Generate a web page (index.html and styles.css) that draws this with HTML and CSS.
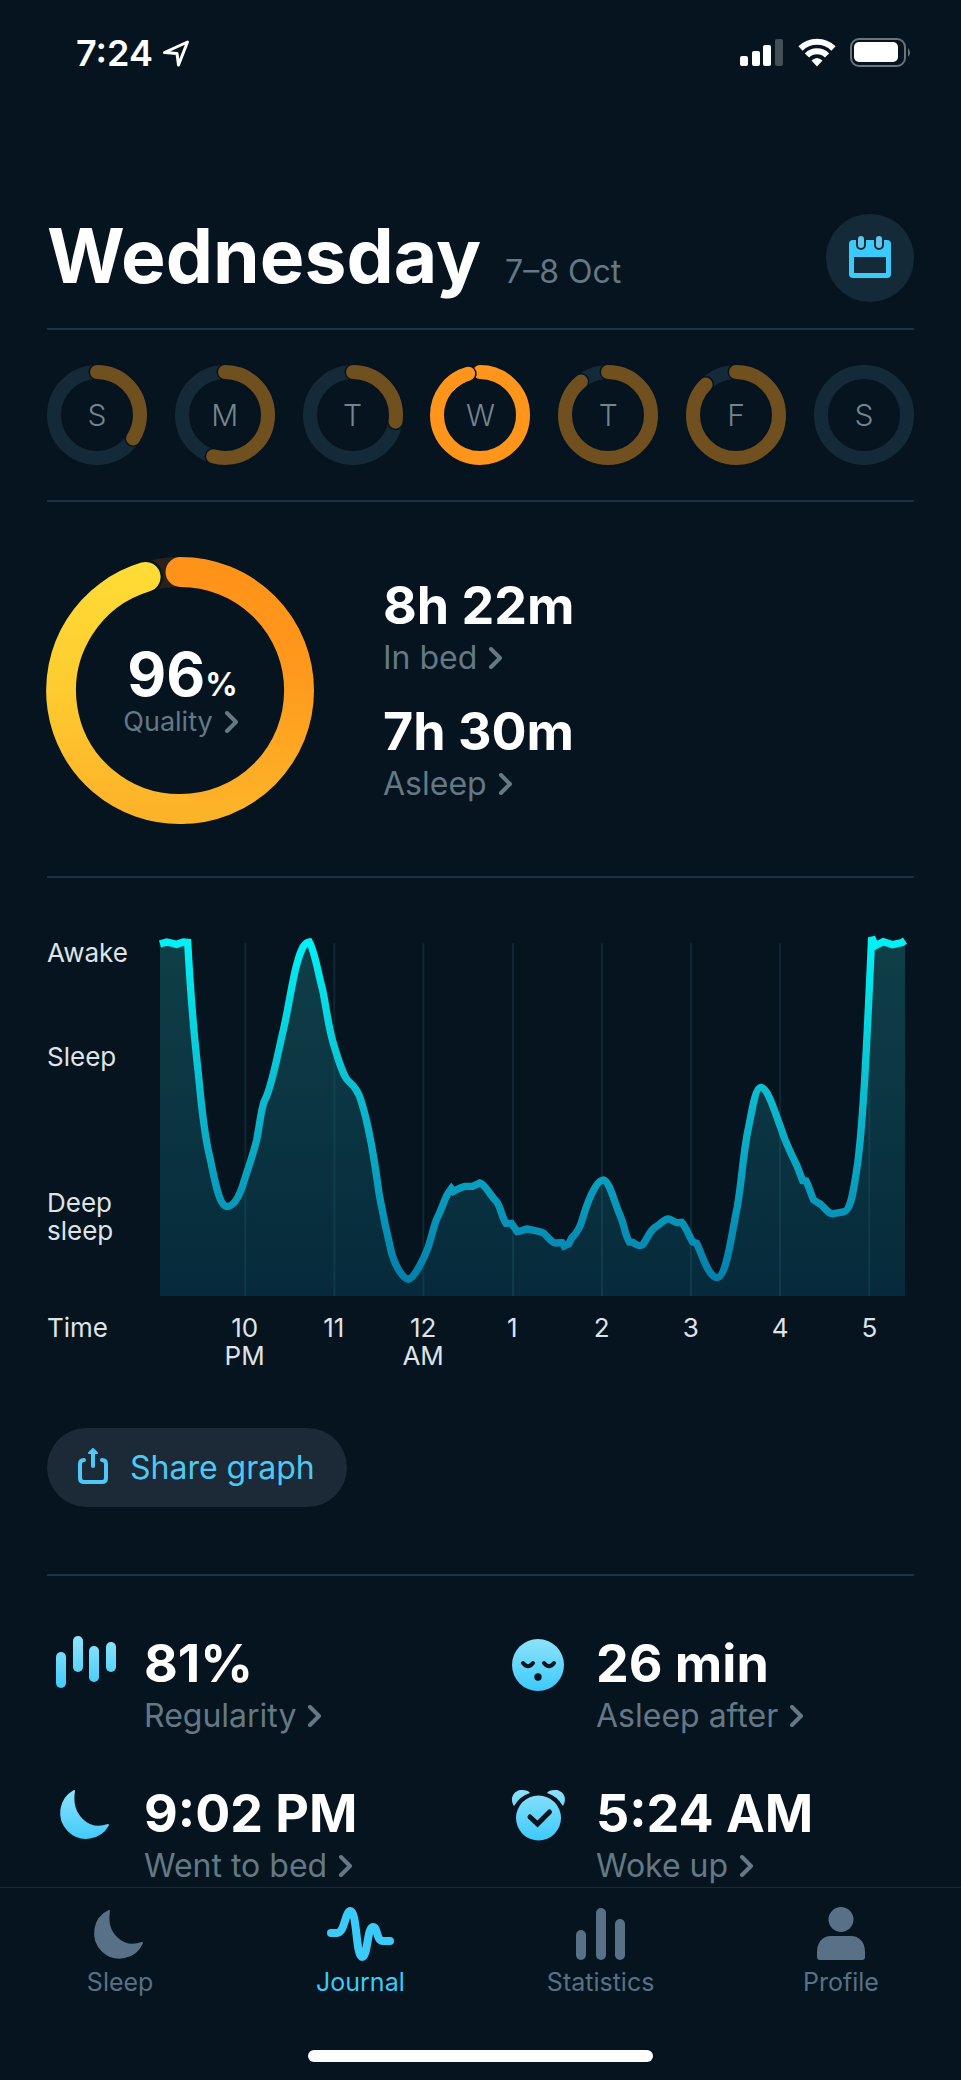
FILE: index.html
```html
<!DOCTYPE html>
<html lang="en">
<head>
<meta charset="utf-8">
<meta name="viewport" content="width=device-width, initial-scale=1">
<title>Sleep journal</title>
<link rel="stylesheet" href="styles.css">
</head>
<body>
<svg class="defs" aria-hidden="true">
  <defs>
    <linearGradient id="sky" x1="0" y1="0" x2="0" y2="56" gradientUnits="userSpaceOnUse">
      <stop offset="0" stop-color="#8fe3fb"/><stop offset="1" stop-color="#38c8fb"/>
    </linearGradient>
    <symbol id="chevron" viewBox="0 0 14 22"><path d="M3 2 L12 11 L3 20" fill="none" stroke="currentColor" stroke-width="4" stroke-linecap="round" stroke-linejoin="round"/></symbol>
  </defs>
</svg>

<div class="status">
  <div class="status-left">
    <time class="clock">7:24</time>
    <svg width="28" height="28" viewBox="0 0 28 28" aria-hidden="true"><path d="M2.5 13.5 L25.5 3 L16.500 26 L15 14.500 Z" fill="none" stroke="#fff" stroke-width="3" stroke-linejoin="round"/></svg>
  </div>
  <div class="status-right">
    <svg width="44" height="30" viewBox="0 0 44 30" aria-hidden="true"><g fill="#fff"><rect x="0" y="18" width="8" height="10" rx="2"/><rect x="12" y="13" width="8" height="15" rx="2"/><rect x="23" y="7" width="8" height="21" rx="2"/><rect x="35" y="1" width="8" height="27" rx="2" opacity=".25"/></g></svg>
    <svg width="38" height="30" viewBox="0 0 38 30" aria-hidden="true"><g fill="none" stroke="#fff" stroke-width="6"><path d="M2.500 10.500 A23.500 23.500 0 0 1 35.500 10.500"/><path d="M9 17.500 A14 14 0 0 1 29 17.500"/></g><path d="M13.500 22.500 Q19 17.500 24.500 22.500 L19 28.500 Z" fill="#fff"/></svg>
    <svg width="62" height="30" viewBox="0 0 62 30" aria-hidden="true"><rect x="1" y="1" width="54" height="27" rx="8" fill="none" stroke="#69747b" stroke-width="2"/><rect x="4" y="4" width="44" height="20" rx="5" fill="#fff"/><path d="M58 10 Q62 14.500 58 19 Z" fill="#69747b"/></svg>
  </div>
</div>

<main>
  <header class="header">
    <div class="title">
      <h1>Wednesday</h1>
      <p class="date">7–8 Oct</p>
    </div>
    <button class="calendar" type="button" aria-label="Open calendar">
      <svg width="44" height="44" viewBox="0 0 44 44" aria-hidden="true"><rect x="1" y="4" width="42" height="38" rx="4" fill="#3acbfa"/><rect x="6" y="21" width="32" height="16" fill="#152a38"/><g fill="#62c6ea" stroke="#152a38" stroke-width="2"><rect x="9" y="-1" width="8" height="14" rx="4"/><rect x="27" y="-1" width="8" height="14" rx="4"/></g></svg>
    </button>
  </header>

  <nav class="week" aria-label="Days">
    <button class="day" type="button"><svg viewBox="0 0 100 100" aria-hidden="true"><circle class="track" cx="50" cy="50" r="43"/><circle class="gap" pathLength="360" stroke-dasharray="123 400" cx="50" cy="50" r="43"/><circle class="arc" pathLength="360" stroke-dasharray="123 400" cx="50" cy="50" r="43"/></svg><span>S</span></button>
    <button class="day" type="button"><svg viewBox="0 0 100 100" aria-hidden="true"><circle class="track" cx="50" cy="50" r="43"/><circle class="gap" pathLength="360" stroke-dasharray="196 400" cx="50" cy="50" r="43"/><circle class="arc" pathLength="360" stroke-dasharray="196 400" cx="50" cy="50" r="43"/></svg><span>M</span></button>
    <button class="day" type="button"><svg viewBox="0 0 100 100" aria-hidden="true"><circle class="track" cx="50" cy="50" r="43"/><circle class="gap" pathLength="360" stroke-dasharray="99 400" cx="50" cy="50" r="43"/><circle class="arc" pathLength="360" stroke-dasharray="99 400" cx="50" cy="50" r="43"/></svg><span>T</span></button>
    <button class="day current" type="button" aria-current="date"><svg viewBox="0 0 100 100" aria-hidden="true"><circle class="arc" pathLength="360" stroke-dasharray="344 400" cx="50" cy="50" r="43"/><circle class="gap" pathLength="360" stroke-dasharray="1 400" stroke-dashoffset="-343" cx="50" cy="50" r="43"/><circle class="arc" pathLength="360" stroke-dasharray="30 400" stroke-dashoffset="-314" cx="50" cy="50" r="43"/></svg><span>W</span></button>
    <button class="day" type="button"><svg viewBox="0 0 100 100" aria-hidden="true"><circle class="track" cx="50" cy="50" r="43"/><circle class="gap" pathLength="360" stroke-dasharray="321 400" cx="50" cy="50" r="43"/><circle class="arc" pathLength="360" stroke-dasharray="321 400" cx="50" cy="50" r="43"/></svg><span>T</span></button>
    <button class="day" type="button"><svg viewBox="0 0 100 100" aria-hidden="true"><circle class="track" cx="50" cy="50" r="43"/><circle class="gap" pathLength="360" stroke-dasharray="315 400" cx="50" cy="50" r="43"/><circle class="arc" pathLength="360" stroke-dasharray="315 400" cx="50" cy="50" r="43"/></svg><span>F</span></button>
    <button class="day" type="button"><svg viewBox="0 0 100 100" aria-hidden="true"><circle class="track" cx="50" cy="50" r="43"/></svg><span>S</span></button>
  </nav>

  <section class="summary">
    <div class="quality">
      <svg viewBox="0 0 268 268" aria-hidden="true">
        <defs>
          <linearGradient id="warm" x1="0" y1="15" x2="0" y2="253" gradientUnits="userSpaceOnUse"><stop offset="0" stop-color="#ff931a"/><stop offset=".4" stop-color="#ff981c"/><stop offset="1" stop-color="#fdb328"/></linearGradient>
          <linearGradient id="gold" x1="0" y1="15" x2="0" y2="253" gradientUnits="userSpaceOnUse"><stop offset="0" stop-color="#ffdb35"/><stop offset=".5" stop-color="#fecb30"/><stop offset="1" stop-color="#fdb328"/></linearGradient>
        </defs>
        <g fill="none" stroke-width="30">
          <path d="M99 20 A119 119 0 0 1 134 15" stroke="#2a211b"/>
          <path d="M134 15 A119 119 0 0 1 134 253" stroke="url(#warm)" stroke-linecap="round"/>
          <path d="M96 21 L99 20" stroke="#05141e" stroke-width="35" stroke-linecap="round"/>
          <path d="M134 253 A119 119 0 0 1 99 20" stroke="url(#gold)" stroke-linecap="round"/>
        </g>
      </svg>
      <div class="quality-text">
        <strong class="score">96<small>%</small></strong>
        <a class="more small" href="#quality">Quality <svg class="chev"><use href="#chevron"/></svg></a>
      </div>
    </div>
    <div class="durations">
      <div><strong class="value">8h 22m</strong><a class="more" href="#bed">In bed <svg class="chev"><use href="#chevron"/></svg></a></div>
      <div><strong class="value">7h 30m</strong><a class="more" href="#asleep">Asleep <svg class="chev"><use href="#chevron"/></svg></a></div>
    </div>
  </section>

  <section class="graph">
    <div class="chart">
      <div class="levels"><span>Awake</span><span>Sleep</span><span>Deep<br>sleep</span></div>
      <svg class="plot" viewBox="480 90 2235 1098" preserveAspectRatio="none" role="img" aria-label="Sleep depth over the night">
        <defs>
          <linearGradient id="line" x1="0" y1="120" x2="0" y2="1140" gradientUnits="userSpaceOnUse"><stop offset="0" stop-color="#00f2f5"/><stop offset=".45" stop-color="#0cbccf"/><stop offset="1" stop-color="#0580ac"/></linearGradient>
          <linearGradient id="area" x1="0" y1="120" x2="0" y2="1188" gradientUnits="userSpaceOnUse"><stop offset="0" stop-color="#0f3f48"/><stop offset="1" stop-color="#062a3b"/></linearGradient>
          <path id="curve" d="M480 132 L500 126 L530 133 L550 126 L563 127 C570 250 580 390 595 520 C603 600 610 690 628 765 C642 825 655 920 682 920 C700 918 715 895 727 860 C740 815 758 770 770 720 C778 680 783 630 792 606 L800 588 C822 530 832 465 850 390 C865 325 872 270 886 210 C897 165 908 128 928 126 C945 155 955 225 968 270 C980 330 985 380 1000 430 C1015 480 1030 530 1045 543 C1062 558 1075 572 1085 608 C1115 705 1125 800 1138 885 C1150 950 1163 1010 1175 1060 C1187 1100 1208 1136 1226 1138 C1245 1132 1272 1075 1285 1040 C1296 1008 1305 960 1316 945 C1327 920 1337 890 1344 880 L1354 866 L1360 874 C1375 867 1385 860 1397 859 L1418 859 L1440 849 C1455 853 1470 885 1488 903 C1503 920 1502 945 1518 970 L1534 970 L1552 995 C1565 994 1575 987 1582 987 C1600 992 1617 991 1632 1000 C1645 1012 1655 1027 1666 1029 L1686 1028 L1692 1038 L1706 1032 L1715 1014 C1730 1000 1740 985 1748 955 C1760 915 1785 840 1811 840 C1830 845 1845 915 1862 950 C1873 975 1875 1005 1888 1026 L1898 1027 C1908 1036 1920 1039 1928 1034 C1940 1020 1948 993 1965 982 C1980 975 1992 957 2004 957 C2015 957 2025 970 2035 968 L2045 967 C2057 980 2065 1003 2078 1026 L2090 1030 C2105 1060 2125 1133 2152 1133 C2180 1130 2195 1000 2212 920 C2227 830 2228 770 2244 690 C2255 640 2265 563 2282 562 C2305 563 2325 640 2345 690 C2355 725 2375 765 2390 795 L2408 842 L2418 843 C2430 865 2433 885 2441 900 L2462 913 C2475 923 2485 943 2500 941 L2530 936 C2555 933 2562 860 2573 790 C2592 640 2602 390 2615 112 L2626 137 L2650 125 L2678 134 L2706 128 L2715 122"/>
        </defs>
        <use href="#curve" fill="none" stroke="#020b14" stroke-width="22" opacity=".4" y="8"/>
        <path d="M480 132 L500 126 L530 133 L550 126 L563 127 C570 250 580 390 595 520 C603 600 610 690 628 765 C642 825 655 920 682 920 C700 918 715 895 727 860 C740 815 758 770 770 720 C778 680 783 630 792 606 L800 588 C822 530 832 465 850 390 C865 325 872 270 886 210 C897 165 908 128 928 126 C945 155 955 225 968 270 C980 330 985 380 1000 430 C1015 480 1030 530 1045 543 C1062 558 1075 572 1085 608 C1115 705 1125 800 1138 885 C1150 950 1163 1010 1175 1060 C1187 1100 1208 1136 1226 1138 C1245 1132 1272 1075 1285 1040 C1296 1008 1305 960 1316 945 C1327 920 1337 890 1344 880 L1354 866 L1360 874 C1375 867 1385 860 1397 859 L1418 859 L1440 849 C1455 853 1470 885 1488 903 C1503 920 1502 945 1518 970 L1534 970 L1552 995 C1565 994 1575 987 1582 987 C1600 992 1617 991 1632 1000 C1645 1012 1655 1027 1666 1029 L1686 1028 L1692 1038 L1706 1032 L1715 1014 C1730 1000 1740 985 1748 955 C1760 915 1785 840 1811 840 C1830 845 1845 915 1862 950 C1873 975 1875 1005 1888 1026 L1898 1027 C1908 1036 1920 1039 1928 1034 C1940 1020 1948 993 1965 982 C1980 975 1992 957 2004 957 C2015 957 2025 970 2035 968 L2045 967 C2057 980 2065 1003 2078 1026 L2090 1030 C2105 1060 2125 1133 2152 1133 C2180 1130 2195 1000 2212 920 C2227 830 2228 770 2244 690 C2255 640 2265 563 2282 562 C2305 563 2325 640 2345 690 C2355 725 2375 765 2390 795 L2408 842 L2418 843 C2430 865 2433 885 2441 900 L2462 913 C2475 923 2485 943 2500 941 L2530 936 C2555 933 2562 860 2573 790 C2592 640 2602 390 2615 112 L2626 137 L2650 125 L2678 134 L2706 128 L2715 122 V1188 H480 Z" fill="url(#area)"/>
        <path d="M736 130 V1188 M1003 130 V1188 M1270 130 V1188 M1539 130 V1188 M1806 130 V1188 M2073 130 V1188 M2340 130 V1188 M2608 130 V1188" fill="none" stroke="#2f7184" stroke-opacity=".22" stroke-width="6"/>
        <use href="#curve" fill="none" stroke="url(#line)" stroke-width="22" stroke-miterlimit="2"/>
      </svg>
      <span class="axis">Time</span>
      <div class="hours"><span>10<br>PM</span><span>11</span><span>12<br>AM</span><span>1</span><span>2</span><span>3</span><span>4</span><span>5</span></div>
    </div>
    <button class="share" type="button">
      <svg width="30" height="38" viewBox="0 0 30 38" aria-hidden="true"><path d="M6 11 C3 11 2 13 2 15 V29 Q2 33 6 33 H24 Q28 33 28 29 V15 C28 13 27 11 24 11 M15 17 V4" fill="none" stroke="currentColor" stroke-width="4" stroke-linecap="round"/><path d="M15 0 L19 4 H11 Z" fill="currentColor" stroke="currentColor" stroke-width="2" stroke-linejoin="round"/></svg>
      Share graph
    </button>
  </section>

  <section class="stats">
    <div class="stat">
      <svg class="stat-icon" viewBox="0 0 78 56" aria-hidden="true"><g fill="url(#sky)"><rect x="9" y="14" width="10" height="36" rx="5"/><rect x="26" y="-2" width="10" height="36" rx="5"/><rect x="42" y="8" width="10" height="36" rx="5"/><rect x="59" y="4" width="10" height="30" rx="5"/></g></svg>
      <div><strong class="value">81%</strong><a class="more" href="#regularity">Regularity <svg class="chev"><use href="#chevron"/></svg></a></div>
    </div>
    <div class="stat">
      <svg class="stat-icon" viewBox="0 0 78 56" aria-hidden="true"><circle cx="39" cy="27" r="26" fill="url(#sky)"/><g fill="none" stroke="#05141e" stroke-width="4" stroke-linecap="round"><path d="M24 25 Q29 31.500 34 25"/><path d="M45 25 Q50 31.500 55 25"/></g><circle cx="39" cy="39" r="3.700" fill="#05141e"/></svg>
      <div><strong class="value">26 min</strong><a class="more" href="#asleep-after">Asleep after <svg class="chev"><use href="#chevron"/></svg></a></div>
    </div>
    <div class="stat">
      <svg class="stat-icon" viewBox="2 -1 78 56" aria-hidden="true"><path d="M29 2 A25 25 0 1 0 63 36 C43 43 25 26 29 2 Z" fill="url(#sky)" stroke="url(#sky)" stroke-width="2" stroke-linejoin="round"/></svg>
      <div><strong class="value">9:02 PM</strong><a class="more" href="#went-to-bed">Went to bed <svg class="chev"><use href="#chevron"/></svg></a></div>
    </div>
    <div class="stat">
      <svg class="stat-icon" viewBox="0 0 78 56" aria-hidden="true"><circle cx="39.500" cy="30" r="22.500" fill="url(#sky)"/><g fill="url(#sky)"><path d="M15 18 C10 10 15 2 23 2 C27 2 30 3 31 5 Q21 8 15 18 Z"/><path d="M64 18 C69 10 64 2 56 2 C52 2 49 3 48 5 Q58 8 64 18 Z"/></g><path d="M31 29 L38.500 36 L50.500 24" fill="none" stroke="#05141e" stroke-width="5" stroke-linecap="round"/></svg>
      <div><strong class="value">5:24 AM</strong><a class="more" href="#woke-up">Woke up <svg class="chev"><use href="#chevron"/></svg></a></div>
    </div>
  </section>
</main>

<footer class="bottom">
  <nav class="tabs" aria-label="Main">
    <a class="tab" href="#sleep"><svg width="72" height="56" viewBox="3 -2 72 56" aria-hidden="true"><path d="M28 3 A24.500 24.500 0 1 0 61 35 C42 42 24 26 28 3 Z" fill="currentColor" stroke="currentColor" stroke-width="2" stroke-linejoin="round"/></svg>Sleep</a>
    <a class="tab active" href="#journal" aria-current="page"><svg width="72" height="56" viewBox="0 0 72 56" aria-hidden="true"><path d="M7 27 H13 C21 27 21 5 26.500 5 C33 5 32 51 38 51 C44 51 43 21 49 21 C54 21 52 35 59 35 H66" fill="none" stroke="currentColor" stroke-width="8" stroke-linecap="round"/></svg>Journal</a>
    <a class="tab" href="#statistics"><svg width="72" height="56" viewBox="0 0 72 56" aria-hidden="true"><g fill="currentColor"><rect x="11" y="24" width="10" height="30" rx="5"/><rect x="31" y="2" width="10" height="52" rx="5"/><rect x="50" y="13" width="10" height="41" rx="5"/></g></svg>Statistics</a>
    <a class="tab" href="#profile"><svg width="72" height="56" viewBox="0 0 72 56" aria-hidden="true"><circle cx="36" cy="13.500" r="12.500" fill="currentColor"/><path d="M12 51 V46 C12 36 18 30 26 30 H46 C54 30 60 36 60 46 V51 Q60 54 57 54 H15 Q12 54 12 51 Z" fill="currentColor"/></svg>Profile</a>
  </nav>
  <div class="home"></div>
</footer>
</body>
</html>
```
FILE: styles.css
```css
:root {
  --bg: #05141e;
  --rule: #1b3342;
  --muted: #647985;
  --track: #152a38;
  --accent: #3acbfa;
}

* { box-sizing: border-box; margin: 0; }

body {
  display: flex;
  flex-direction: column;
  min-height: 100vh;
  background: var(--bg);
  color: #fff;
  font-family: Inter, "Liberation Sans", sans-serif;
}

button { border: 0; padding: 0; background: none; font: inherit; color: inherit; }
a { color: inherit; text-decoration: none; }
svg { display: block; flex: none; overflow: visible; }
.defs { position: absolute; width: 0; height: 0; }

.status {
  display: flex;
  justify-content: space-between;
  align-items: center;
  padding: 31px 49px 0 76px;
}
.status-left { display: flex; align-items: center; gap: 9px; }
.status-right { display: flex; align-items: center; gap: 14px; }
.clock { font-size: 36px; line-height: 44px; font-weight: 600; }

main { padding: 0 47px; }

.header {
  display: flex;
  justify-content: space-between;
  align-items: flex-start;
  margin-top: 139px;
  padding-bottom: 26px;
  border-bottom: 2px solid var(--rule);
}
.title { display: flex; align-items: baseline; gap: 24px; }
h1 { font-size: 75px; line-height: 84px; font-weight: 700; }
.date { font-size: 32px; color: var(--muted); }
.calendar {
  display: grid;
  place-items: center;
  width: 88px;
  height: 88px;
  border-radius: 50%;
  background: var(--track);
}

.week {
  display: flex;
  justify-content: space-between;
  padding: 35px 0;
  border-bottom: 2px solid var(--rule);
}
.day {
  display: grid;
  place-items: center;
  width: 100px;
  height: 100px;
  font-size: 30px;
  font-weight: 300;
  color: #74858f;
}
.day > * { grid-area: 1 / 1; }
.day svg { width: 100%; transform: rotate(-90deg); }
.day circle { fill: none; stroke-width: 14; }
.day .track { stroke: var(--track); }
.day .gap { stroke: var(--bg); stroke-width: 17; stroke-linecap: round; }
.day .arc { stroke: #70501f; stroke-linecap: round; }
.day.current .arc { stroke: #ff951a; }

.summary {
  display: flex;
  align-items: center;
  gap: 69px;
  padding: 55px 0 52px;
  border-bottom: 2px solid var(--rule);
}
.quality { display: grid; place-items: center; width: 267px; }
.quality > * { grid-area: 1 / 1; }
.quality > svg { width: 100%; }
.quality-text { display: flex; flex-direction: column; align-items: flex-end; }
.score { font-size: 60px; line-height: 60px; font-weight: 700; }
.score small { font-size: 32px; line-height: 32px; }
.durations { display: grid; gap: 30px; }
.value { display: block; font-size: 52px; line-height: 52px; font-weight: 700; }
.more {
  display: flex;
  align-items: center;
  gap: 11px;
  margin-top: 8px;
  font-size: 32px;
  line-height: 36px;
  color: var(--muted);
}
.more.small { margin-top: 2px; font-size: 27px; line-height: 32px; }
.chev { width: 14px; height: 22px; }

.graph { padding: 52px 0 67px; border-bottom: 2px solid var(--rule); }
.chart {
  display: grid;
  grid-template-columns: 113px 1fr;
  row-gap: 18px;
  font-size: 26px;
  line-height: 28px;
  color: #dfe3e8;
}
.levels { display: flex; flex-direction: column; padding-top: 9px; }
.levels span:nth-child(2) { margin: 76px 0 118px; }
.plot { width: calc(100% - 9px); height: 366px; }
.hours {
  display: grid;
  grid-template-columns: repeat(8, 1fr);
  margin-left: 40px;
  text-align: center;
}
.share {
  display: flex;
  align-items: center;
  gap: 22px;
  height: 79px;
  margin-top: 58px;
  padding: 0 32px 0 31px;
  border-radius: 40px;
  background: #1b2a36;
  color: #4ec8f4;
  font-size: 32px;
}

.stats {
  display: grid;
  grid-template-columns: 1fr 1fr;
  gap: 54px 37px;
  padding: 62px 0 2px;
}
.stat { display: flex; gap: 19px; }
.stat-icon { width: 78px; height: 56px; }

.bottom { margin-top: auto; border-top: 1px solid #1b2b36; padding: 18px 0; }
.tabs { display: grid; grid-template-columns: repeat(4, 1fr); }
.tab {
  display: flex;
  flex-direction: column;
  align-items: center;
  gap: 5px;
  font-size: 25px;
  line-height: 30px;
  color: #587186;
}
.tab.active { color: var(--accent); }
.home {
  width: 36%;
  height: 12px;
  margin: 53px auto 0;
  border-radius: 6px;
  background: #fff;
}
```
